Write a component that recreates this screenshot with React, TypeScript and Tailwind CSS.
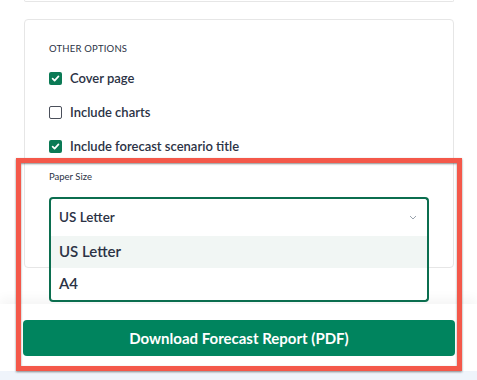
import React from "react";

const font = { fontFamily: "Lato, 'Noto Sans', sans-serif" };

function Check({ checked }: { checked: boolean }) {
  if (checked) {
    return (
      <span className="flex h-[13px] w-[13px] items-center justify-center rounded-[2px] bg-[#0b7a55]">
        <svg width="9" height="9" viewBox="0 0 10 10" fill="none">
          <path d="M1.8 5.2 L4 7.3 L8.3 2.6" stroke="white" strokeWidth="1.9" strokeLinecap="round" strokeLinejoin="round" />
        </svg>
      </span>
    );
  }
  return <span className="h-[13px] w-[13px] rounded-[2px] border border-[#4a4f5a] bg-white" />;
}

function Row({ checked, label }: { checked: boolean; label: string }) {
  return (
    <div className="flex h-[17px] items-center gap-2">
      <Check checked={checked} />
      <span className="text-[13px] font-semibold text-[#2b3245]">{label}</span>
    </div>
  );
}

export default function App() {
  return (
    <div className="relative h-[380px] w-[477px] overflow-hidden bg-white" style={font}>
      <div className="flex h-[371px] flex-col">
        <div className="px-6">
          <div className="h-[2px] w-[430px] rounded-b border-x border-b border-[#e6e6e6]" />
        </div>
        <div className="mt-[17px] px-6">
          <div className="w-[430px] rounded border border-[#e6e6e6] bg-white px-6 pb-[31px] pt-[22px]">
            <div className="text-[9.5px] uppercase tracking-[0.2px] text-[#2b3245]">Other options</div>
            <div className="mt-[14px] flex flex-col gap-[17px]">
              <Row checked label="Cover page" />
              <Row checked={false} label="Include charts" />
              <Row checked label="Include forecast scenario title" />
            </div>
            <div className="mt-[15px] text-[9.5px] text-[#2b3245]">Paper Size</div>
            <div className="relative mt-[12px]">
              <div className="flex h-[39px] items-center justify-between rounded-t-[4px] border-x-2 border-t-2 border-[#0b6e4f] pl-[8px] pr-[10px]">
                <span className="text-[13.5px] font-semibold text-[#2b3245]">US Letter</span>
                <svg width="8" height="5" viewBox="0 0 8 5" fill="none">
                  <path d="M1 1 L4 4 L7 1" stroke="#9aa3ad" strokeWidth="1" />
                </svg>
              </div>
              <div className="absolute left-0 right-0 top-[39px] z-10 rounded-b-[4px] border-x-2 border-b-2 border-[#0b6e4f] bg-white">
                <div className="flex h-[32px] items-center bg-[#f1f6f4] pl-[8px] text-[15px] font-semibold text-[#2b3245]">US Letter</div>
                <div className="flex h-[32px] items-center pl-[8px] text-[15px] font-semibold text-[#2b3245]">A4</div>
              </div>
            </div>
          </div>
        </div>
        <div className="mt-auto h-[67px] bg-white px-[23px] pt-[16px] shadow-[0_-6px_10px_rgba(0,0,0,0.04)]">
          <button className="flex h-[36px] w-[432px] items-center justify-center rounded-[4px] bg-[#00845e] text-[15px] font-bold text-white">
            Download Forecast Report (PDF)
          </button>
        </div>
      </div>
      <div className="h-[9px] bg-[#eff4fb]" />
      <div className="pointer-events-none absolute left-[16px] top-[158px] z-20 h-[213px] w-[446px] border-[5px] border-[#f4584a] shadow-[0_1px_2px_rgba(0,0,0,0.45),inset_0_1px_2px_rgba(0,0,0,0.45)]" />
    </div>
  );
}
